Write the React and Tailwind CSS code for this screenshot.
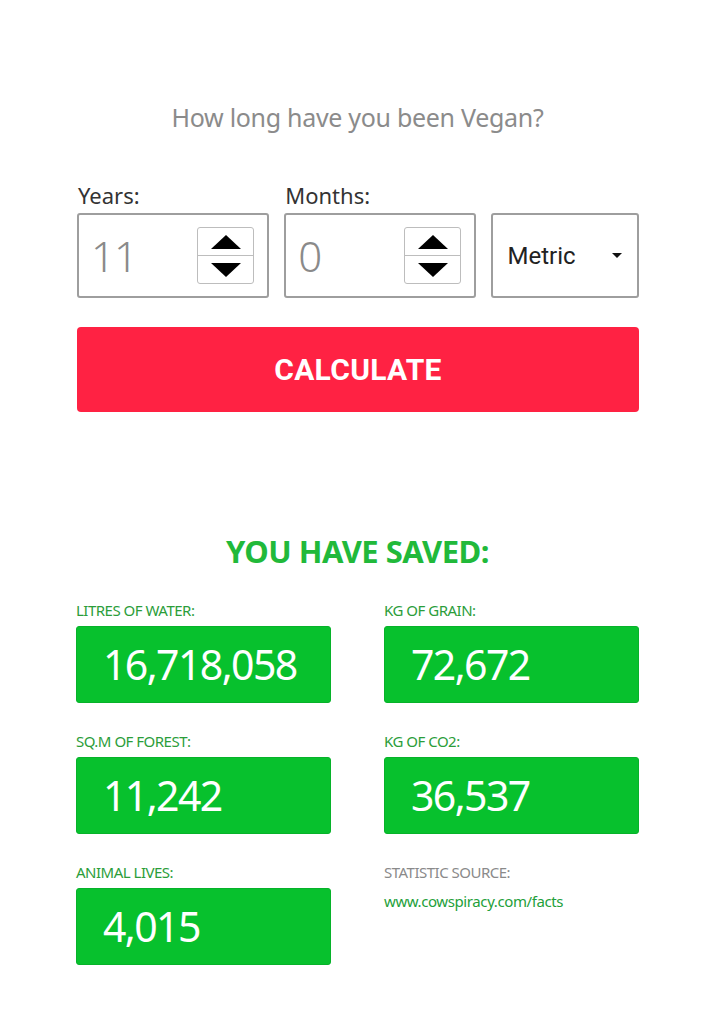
import React from "react";

function Spinner() {
  return (
    <div className="flex flex-col w-[57px] h-[57px] border border-[#bdbdbd] rounded-[3px] bg-white">
      <div className="flex-1 flex items-center justify-center border-b border-[#bdbdbd]">
        <svg width="30" height="14" viewBox="0 0 30 14"><polygon points="15,0 30,14 0,14" fill="#000" /></svg>
      </div>
      <div className="flex-1 flex items-center justify-center">
        <svg width="30" height="14" viewBox="0 0 30 14"><polygon points="0,0 30,0 15,14" fill="#000" /></svg>
      </div>
    </div>
  );
}

function NumberField({ label, value }) {
  return (
    <div className="flex flex-col w-[193px]">
      <div className="text-[22px] leading-[26px] text-[#333] h-[26px] mb-[5px] pl-px">{label}</div>
      <div className="h-[85px] border-2 border-[#9e9e9e] rounded-[3px] flex items-center justify-between pl-[12px] pr-[13px]">
        <span className="text-[42px] font-light text-[#8a8a8a] tracking-[-1px]">{value}</span>
        <Spinner />
      </div>
    </div>
  );
}

function Stat({ label, value }) {
  return (
    <div className="flex flex-col">
      <div className="text-[15px] leading-[18px] text-[#2b9d3a] tracking-[-0.5px] mb-[7px]">{label}</div>
      <div className="h-[77px] bg-[#07c12d] rounded-[3px] border border-[#07b22a] flex items-center pl-[26px]">
        <span className="text-[41px] leading-none text-white tracking-[-1.6px]">{value}</span>
      </div>
    </div>
  );
}

export default function App() {
  return (
    <div className="min-h-[1023px] bg-white font-['Noto_Sans',sans-serif] pl-[76px] pr-[62px]">
      <div className="pt-[101px] text-center text-[25px] leading-[32px] text-[#8b8b8b] tracking-[-0.3px]">
        How long have you been Vegan?
      </div>
      <div className="flex items-end gap-[15px] mt-[49px] pl-px">
        <NumberField label="Years:" value="11" />
        <NumberField label="Months:" value="0" />
        <div className="w-[148px] h-[85px] border-2 border-[#9e9e9e] rounded-[3px] flex items-center justify-between pl-[14px] pr-[15px]">
          <span className="font-['Roboto',sans-serif] text-[24px] text-[#222]">Metric</span>
          <svg width="10" height="5" viewBox="0 0 10 5"><polygon points="0,0 10,0 5,5" fill="#111" /></svg>
        </div>
      </div>
      <button className="mt-[29px] ml-px w-[562px] h-[85px] bg-[#ff2243] rounded-[4px] flex items-center justify-center">
        <span className="font-['Roboto',sans-serif] font-bold text-[30px] text-white tracking-[0.3px]">CALCULATE</span>
      </button>
      <div className="mt-[121px] text-center text-[31px] leading-[36px] font-bold text-[#21b93a] tracking-[-0.5px]">
        YOU HAVE SAVED:
      </div>
      <div className="grid grid-cols-2 gap-x-[53px] gap-y-[29px] mt-[32px]">
        <Stat label="LITRES OF WATER:" value="16,718,058" />
        <Stat label="KG OF GRAIN:" value="72,672" />
        <Stat label="SQ.M OF FOREST:" value="11,242" />
        <Stat label="KG OF CO2:" value="36,537" />
        <Stat label="ANIMAL LIVES:" value="4,015" />
        <div className="flex flex-col">
          <div className="text-[15px] leading-[18px] text-[#8a8a8a] tracking-[-0.5px]">STATISTIC SOURCE:</div>
          <div className="mt-[11px] text-[15px] leading-[18px] text-[#23a03a] tracking-[-0.4px]">www.cowspiracy.com/facts</div>
        </div>
      </div>
    </div>
  );
}
